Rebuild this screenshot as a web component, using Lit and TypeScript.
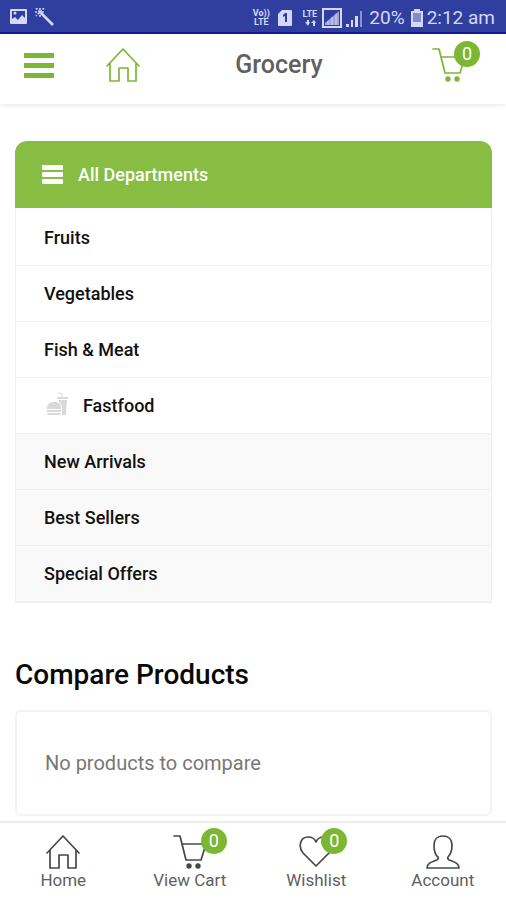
import { LitElement, html, css, svg, nothing } from "lit";
import { customElement, property } from "lit/decorators.js";

const home = svg`<path d="M1 18 17 1l16 17M4 15v18h9V20h9v13h8V15" />`;
const cart = svg`
  <path d="M1 1h6l6 24h15l5-16H10" />
  <circle class="dot" cx="16" cy="31" r="2.7" />
  <circle class="dot" cx="25" cy="31" r="2.7" />`;
const heart = svg`<path d="M17 31 4 18C-1 12 1 2 9 2c4 0 7 2 8 5 1-3 4-5 8-5 8 0 10 10 5 16Z" />`;
const person = svg`<path d="M17 1c-6 0-9 4-9 9 0 6 1 10 4 12 1 1 0 2-1 3-5 2-10 3-10 8h32c0-5-5-6-10-8-1-1-2-2-1-3 3-3 4-6 4-12 0-5-3-9-9-9Z" />`;

@customElement("status-bar")
class StatusBar extends LitElement {
  static styles = css`
    :host {
      display: flex;
      align-items: center;
      justify-content: space-between;
      box-sizing: border-box;
      height: 34px;
      padding: 4px 11px 0 10px;
      background: #303f9f;
      border-bottom: 2px solid #101c96;
      color: #d3d9fa;
      font: 400 19px/28px Roboto, sans-serif;
    }
    .group {
      display: flex;
      align-items: center;
    }
    svg {
      display: block;
      fill: #d3d9fa;
    }
    .stroke {
      fill: none;
      stroke: #d3d9fa;
    }
    .ink {
      fill: #303f9f;
    }
    .tiny {
      font: 700 9px/9px Roboto, sans-serif;
      text-align: center;
    }
    .volte {
      width: 18px;
      margin-right: 8px;
    }
    .sim {
      margin-right: 8px;
    }
    .lte {
      width: 19px;
      margin-right: 3px;
    }
    .signal {
      margin-right: 4px;
    }
    .charge {
      margin-left: 6px;
    }
    .battery {
      margin: 0 4px 0 6px;
    }
  `;
  render() {
    return html`
      <div class="group">
        <svg width="46" height="20" viewBox="0 0 46 20">
          <rect x="0" y="1" width="17" height="15" rx="1" />
          <path class="ink" d="M2 3h13v7l-3-3-4 5-3-3-3 2Z" />
          <circle cx="5" cy="5" r="1.5" />
          <path class="stroke" stroke-width="2.6" d="m31 5 12 12" />
          <path class="stroke" stroke-width="1.6" stroke-dasharray="2 1.4" d="M30 0v10M25 4h10M26 0l8 8M34 0l-8 8" />
        </svg>
      </div>
      <div class="group">
        <span class="tiny volte">Vo))<br />LTE</span>
        <svg class="sim" width="14" height="18" viewBox="0 0 14 18">
          <path d="M4 1h9a1 1 0 0 1 1 1v14a1 1 0 0 1-1 1H1a1 1 0 0 1-1-1V5Z" />
          <path class="ink" d="M7 4h2v9H7V7L5 8V6Z" />
        </svg>
        <span class="tiny lte">LTE<br />
          <svg width="19" height="8" viewBox="0 0 19 8">
            <path d="M7 1v2H5l3 4 2-4H9V1ZM13 7V4h-2l3-3 2 3h-1v3Z" />
          </svg>
        </span>
        <svg class="signal" width="20" height="20" viewBox="0 0 20 20">
          <rect class="stroke" x="1" y="1" width="18" height="18" stroke-width="2" />
          <path d="M3 17v-2l14-12v14Z" opacity=".65" />
          <path class="stroke" d="M6 17v-4M10 17v-8M14 17V6" />
        </svg>
        <svg width="17" height="18" viewBox="0 0 17 18">
          <path d="M0 15h3v3H0ZM5 11h2v7H5ZM9 7h3v11H9Z" />
          <path d="M14 2h2v16h-2Z" opacity=".55" />
        </svg>
        <span class="charge">20%</span>
        <svg class="battery" width="12" height="18" viewBox="0 0 12 18">
          <path d="M3 0h6v2h3v16H0V2h3Z" />
          <path class="ink" d="M2 4h8v9H2Z" opacity=".5" />
        </svg>
        <span>2:12 am</span>
      </div>
    `;
  }
}

@customElement("line-icon")
class LineIcon extends LitElement {
  @property({ attribute: false }) shape: unknown = nothing;
  @property() count?: string;
  static styles = css`
    :host {
      display: block;
      position: relative;
      width: 34px;
      height: 35px;
    }
    svg {
      display: block;
      fill: none;
      stroke: currentColor;
      stroke-width: 1.7;
      stroke-linejoin: round;
      stroke-linecap: round;
    }
    .dot {
      fill: currentColor;
      stroke: none;
    }
    .badge {
      position: absolute;
      top: -7px;
      right: var(--badge-right, -14px);
      width: 26px;
      height: 26px;
      border-radius: 50%;
      background: #7cb733;
      color: #fff;
      font: 400 18px/26px Roboto, sans-serif;
      text-align: center;
    }
  `;
  render() {
    return html`
      <svg width="34" height="35" viewBox="0 0 34 35" aria-hidden="true">${this.shape}</svg>
      ${this.count === undefined ? nothing : html`<span class="badge">${this.count}</span>`}
    `;
  }
}

@customElement("app-root")
class AppRoot extends LitElement {
  static styles = css`
    :host {
      display: flex;
      flex-direction: column;
      height: 100vh;
      background: #fff;
      color: #111;
      font: 500 18px/24px Roboto, sans-serif;
    }
    a {
      color: inherit;
      text-decoration: none;
    }
    button {
      padding: 0;
      border: 0;
      background: none;
      color: inherit;
      font: inherit;
      cursor: pointer;
    }
    .top {
      display: grid;
      grid-template-columns: 82px 34px 1fr 50px;
      align-items: center;
      height: 70px;
      box-sizing: border-box;
      padding: 0 24px 8px;
      color: #7cb733;
      box-shadow: 0 1px 5px rgba(0, 0, 0, 0.1);
      z-index: 1;
    }
    .menu {
      display: grid;
      gap: 5px;
      width: 30px;
    }
    .menu i {
      height: 5px;
      background: currentColor;
    }
    .title {
      margin: 0;
      padding-right: 14px;
      color: #606060;
      font: 500 25px/32px Roboto, sans-serif;
      text-align: center;
    }
    main {
      flex: 1;
      min-height: 0;
      overflow-y: auto;
      padding: 37px 14px 0 15px;
      scrollbar-width: none;
    }
    .all {
      display: flex;
      align-items: center;
      gap: 15px;
      width: 100%;
      height: 67px;
      padding: 0 27px;
      border-radius: 12px 12px 0 0;
      background: #86bd42;
      color: #fff;
    }
    .bars {
      display: grid;
      gap: 2px;
      width: 21px;
    }
    .bars i {
      height: 5px;
      border-radius: 1px;
      background: currentColor;
    }
    .list {
      margin: 0;
      padding: 2px 0 0;
      border: 1px solid #f0f0f0;
      border-top: 0;
      list-style: none;
    }
    .list a {
      display: flex;
      align-items: center;
      gap: 13px;
      height: 55px;
      padding: 0 28px;
      border-bottom: 1px solid #f0f0f0;
    }
    .list .grey {
      background: #f9f9f9;
    }
    .food {
      fill: #d9d9d9;
      margin-top: -4px;
    }
    .food .line {
      fill: none;
      stroke: #d9d9d9;
    }
    h2 {
      margin: 54px 0 17px;
      font: 500 28px/36px Roboto, sans-serif;
      color: #080808;
    }
    .card {
      margin: 0;
      padding: 40px 28px;
      border: 2px solid #f3f3f3;
      border-radius: 6px;
      color: #777;
      font: 400 20px/22px Roboto, sans-serif;
    }
    .tabs {
      display: grid;
      grid-template-columns: repeat(4, 1fr);
      height: 77px;
      border-top: 2px solid #eee;
      background: #fff;
      color: #606060;
      font: 400 17px/20px Roboto, sans-serif;
    }
    .tabs a {
      display: flex;
      flex-direction: column;
      align-items: center;
      padding-top: 12px;
    }
    .tabs line-icon {
      color: #484848;
    }
    .tabs .wide {
      --badge-right: -20px;
    }
  `;

  private departments = [
    { name: "Fruits" },
    { name: "Vegetables" },
    { name: "Fish & Meat" },
    { name: "Fastfood", food: true },
    { name: "New Arrivals", grey: true },
    { name: "Best Sellers", grey: true },
    { name: "Special Offers", grey: true },
  ] as { name: string; food?: boolean; grey?: boolean }[];

  private tabs = [
    { name: "Home", shape: home },
    { name: "View Cart", shape: cart, count: "0", wide: true },
    { name: "Wishlist", shape: heart, count: "0" },
    { name: "Account", shape: person },
  ] as { name: string; shape: unknown; count?: string; wide?: boolean }[];

  private foodIcon = html`
    <svg class="food" width="26" height="24" viewBox="0 0 26 24" aria-hidden="true">
      <path d="M3 17c0-5 2-7 7-7s7 2 7 7ZM3 18h14v2H3ZM3 21h14q0 2-2 2H5q-2 0-2-2Z" />
      <path d="M13 5h11v2H13ZM15 8h8l-1 15h-4V16q0-4-3-6Z" />
      <path class="line" d="M18 5V2l-4-1" />
    </svg>`;

  render() {
    return html`
      <status-bar></status-bar>
      <header class="top">
        <button class="menu" aria-label="Menu"><i></i><i></i><i></i></button>
        <a href="#home" aria-label="Home"><line-icon .shape=${home}></line-icon></a>
        <h1 class="title">Grocery</h1>
        <a href="#cart" aria-label="Cart"><line-icon .shape=${cart} count="0"></line-icon></a>
      </header>
      <main>
        <nav>
          <button class="all"><span class="bars"><i></i><i></i><i></i></span>All Departments</button>
          <ul class="list">
            ${this.departments.map(
              (d) => html`<li>
                <a class=${d.grey ? "grey" : ""} href="#department">${d.food ? this.foodIcon : nothing}${d.name}</a>
              </li>`
            )}
          </ul>
        </nav>
        <h2>Compare Products</h2>
        <p class="card">No products to compare</p>
      </main>
      <nav class="tabs">
        ${this.tabs.map(
          (t) => html`<a href="#tab">
            <line-icon class=${t.wide ? "wide" : ""} .shape=${t.shape} .count=${t.count}></line-icon>${t.name}
          </a>`
        )}
      </nav>
    `;
  }
}
